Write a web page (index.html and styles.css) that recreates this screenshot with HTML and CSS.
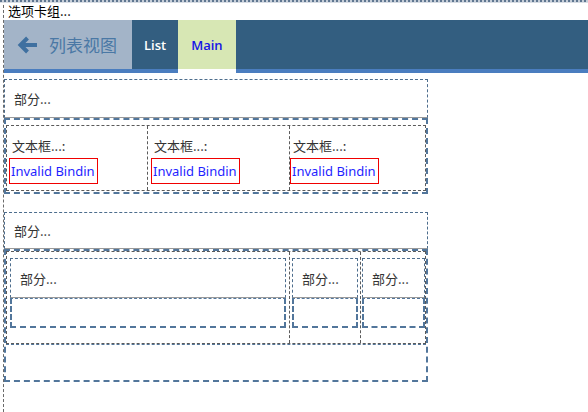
FILE: index.html
```html
<!DOCTYPE html>
<html>
<head>
<meta charset="utf-8">
<link rel="stylesheet" href="styles.css">
</head>
<body>
<div class="tabgroup">
  <div class="tg-strip"></div>
  <div class="tg-title">选项卡组...</div>
  <div class="tabbar">
    <div class="back">
      <svg class="back-icon" width="21" height="20" viewBox="0 0 21 20">
        <path d="M21 10 H5 M11.5 3 L4.5 10 L11.5 17" fill="none" stroke="#3f70a0" stroke-width="4"/>
      </svg>
      <span class="back-text">列表视图</span>
    </div>
    <div class="tab">List</div>
    <div class="tab active">Main</div>
  </div>
  <div class="content">
    <div class="section">
      <div class="sec-head">部分...</div>
      <div class="group g1">
        <div class="fields">
          <div class="field f1">
            <div class="lbl">文本框...:</div>
            <div class="bad">Invalid Bindin</div>
          </div>
          <div class="field f2">
            <div class="lbl">文本框...:</div>
            <div class="bad">Invalid Bindin</div>
          </div>
          <div class="field f3">
            <div class="lbl">文本框...:</div>
            <div class="bad">Invalid Bindin</div>
          </div>
        </div>
      </div>
    </div>
    <div class="section s2">
      <div class="sec-head">部分...</div>
      <div class="group g2">
        <div class="subcols">
          <div class="subcol c1">
            <div class="sub-head">部分...</div>
            <div class="sub-body"></div>
          </div>
          <div class="subcol c2">
            <div class="sub-head">部分...</div>
            <div class="sub-body"></div>
          </div>
          <div class="subcol c3">
            <div class="sub-head">部分...</div>
            <div class="sub-body"></div>
          </div>
        </div>
        <div class="empty-row"></div>
      </div>
    </div>
  </div>
</div>
</body>
</html>
```

FILE: styles.css
```css
* { box-sizing: border-box; }
html, body { margin: 0; padding: 0; background: #fff; overflow: hidden; }
body {
  font-family: "Noto Sans CJK SC", "Noto Sans", sans-serif;
  font-size: 13px;
  color: #333;
  width: 588px;
  height: 412px;
}
.tabgroup {
  margin-left: 3px;
  border-left: 1px dashed #6a6a6a;
  height: 412px;
}
.tg-strip {
  height: 3px;
  margin-left: -4px;
  background: repeating-linear-gradient(90deg, #5f7690 0 2px, #c7cfd9 2px 4px);
  border-bottom: 1px solid #d9dee5;
}
.tg-title {
  height: 17px;
  line-height: 16px;
  padding-left: 4px;
  color: #000;
  font-size: 13px;
}
.tabbar {
  display: flex;
  height: 53px;
  background: #335e80;
  border-bottom: 4px solid #4a7dbf;
}
.back {
  display: flex;
  align-items: center;
  width: 128px;
  background: #a3b4c8;
  padding-left: 12px;
}
.back-icon { display: block; margin-top: 1px; }
.back-text {
  margin-left: 12px;
  font-size: 17px;
  color: #4a78a5;
  line-height: 20px;
}
.tab {
  display: flex;
  align-items: center;
  padding: 0 12px;
  font-family: "Open Sans", "Noto Sans", sans-serif;
  font-weight: 600;
  font-size: 13px;
  color: #fff;
}
.tab.active {
  background: #d7e7b4;
  color: #1515e6;
  padding: 0 13px;
  margin-bottom: -4px;
  border-bottom: 4px solid #fff;
}
.content {
  padding-top: 6px;
  width: 424px;
}
.section.s2 { margin-top: 18px; }
.sec-head {
  height: 39px;
  border: 1px dashed #4d6d8d;
  border-bottom: 1px solid #9a9a9a;
  padding-left: 9px;
  display: flex;
  align-items: center;
  color: #333;
}
.s2 .sec-head { height: 37px; }
.group {
  border: 2px dashed #52769b;
}
.g1 { padding: 5px 0 1px 0; }
.fields {
  display: grid;
  grid-template-columns: 141px 142px 1fr;
  border: 1px dashed #5a5a5a;
  height: 66px;
}
.field {
  padding-top: 11px;
  border-right: 1px dashed #5a5a5a;
}
.field.f3 { border-right: none; }
.f1 { padding-left: 2px; }
.f2 { padding-left: 3px; }
.f3 { padding-left: 0; }
.lbl {
  height: 18px;
  line-height: 18px;
  padding-left: 3px;
  margin-bottom: 3px;
}
.bad {
  width: 89px;
  height: 26px;
  border: 1px solid #f00000;
  color: #1f1fff;
  font-family: "Noto Sans", "Open Sans", sans-serif;
  font-size: 13px;
  line-height: 24px;
  padding-left: 1px;
  white-space: nowrap;
}
.subcols {
  display: grid;
  grid-template-columns: 283px 71px 1fr;
  border: 1px dashed #5a5a5a;
  height: 93px;
}
.subcol {
  padding: 6px 3px 0 3px;
  border-right: 1px dashed #5a5a5a;
}
.subcol.c3 { border-right: none; padding: 6px 0 0 1px; }
.subcol.c2 { padding: 6px 2px 0 2px; }
.sub-head {
  height: 40px;
  border: 1px dashed #4d6d8d;
  border-bottom: 1px solid #9a9a9a;
  display: flex;
  align-items: center;
  padding-left: 9px;
}
.sub-body {
  height: 30px;
  border: 2px dashed #52769b;
  border-top-width: 1px;
}
.empty-row {
  height: 36px;
  border-top: 1px dashed #52769b;
}
```
